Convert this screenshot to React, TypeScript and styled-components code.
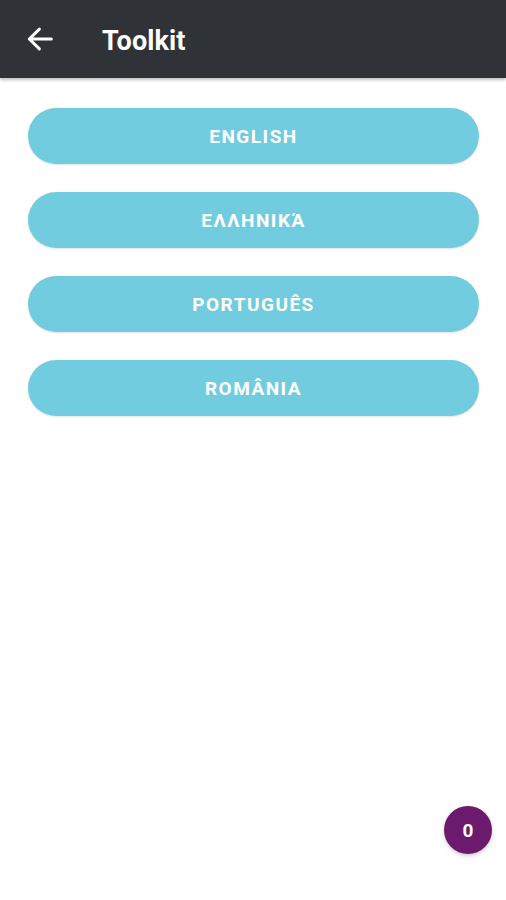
import React from "react";
import styled, { createGlobalStyle } from "styled-components";

const Global = createGlobalStyle`
  html, body { margin: 0; padding: 0; background: #ffffff; }
  body { font-family: Roboto, "Noto Sans", Arial, sans-serif; }
  * { box-sizing: border-box; }
`;

const Page = styled.div`
  width: 506px;
  height: 900px;
  position: relative;
  background: #ffffff;
  overflow: hidden;
`;

const Header = styled.header`
  height: 78px;
  background: #2f3236;
  display: flex;
  align-items: center;
  padding-left: 24px;
  padding-top: 3px;
  gap: 46px;
  box-shadow: 0 2px 3px rgba(0, 0, 0, 0.25);
  position: relative;
  z-index: 1;
`;

const BackButton = styled.button`
  width: 32px;
  height: 32px;
  padding: 0;
  border: none;
  background: transparent;
  display: flex;
  align-items: center;
  justify-content: center;
  color: #ffffff;
  margin-top: -3px;
`;

const Title = styled.h1`
  margin: 0;
  font-family: Roboto, Arial, sans-serif;
  font-weight: 700;
  font-size: 27px;
  color: #ffffff;
  letter-spacing: 0.1px;
`;

const List = styled.div`
  display: flex;
  flex-direction: column;
  gap: 28px;
  padding: 30px 27px 0 28px;
`;

const LangButton = styled.button`
  height: 56px;
  width: 100%;
  border: none;
  border-radius: 28px;
  background: #72cce0;
  color: #ffffff;
  font-family: Roboto, Arial, sans-serif;
  font-weight: 700;
  font-size: 19px;
  letter-spacing: 1.5px;
  text-transform: uppercase;
  box-shadow: 0 1px 2px rgba(0, 0, 0, 0.12);
  display: flex;
  align-items: center;
  justify-content: center;
  padding-top: 2px;
`;

const Badge = styled.div`
  position: absolute;
  right: 14px;
  bottom: 46px;
  width: 48px;
  height: 48px;
  border-radius: 50%;
  background: #6b1a6e;
  color: #ffffff;
  font-family: Roboto, Arial, sans-serif;
  font-weight: 700;
  font-size: 19px;
  display: flex;
  align-items: center;
  justify-content: center;
  box-shadow: 0 2px 4px rgba(0, 0, 0, 0.2);
`;

const languages = ["ENGLISH", "ΕΛΛΗΝΙΚΑ\u0301", "PORTUGUÊS", "ROMÂNIA"];

export default function App() {
  return (
    <Page>
      <Global />
      <Header>
        <BackButton aria-label="Back">
          <svg width="32" height="32" viewBox="0 0 24 24" fill="none">
            <path
              d="M20.5 12H4M11.5 4.6L4 12l7.5 7.4"
              stroke="#ffffff"
              strokeWidth="2.3"
              strokeLinecap="round"
              strokeLinejoin="round"
            />
          </svg>
        </BackButton>
        <Title>Toolkit</Title>
      </Header>
      <List>
        {languages.map((l) => (
          <LangButton key={l}>{l}</LangButton>
        ))}
      </List>
      <Badge>0</Badge>
    </Page>
  );
}
